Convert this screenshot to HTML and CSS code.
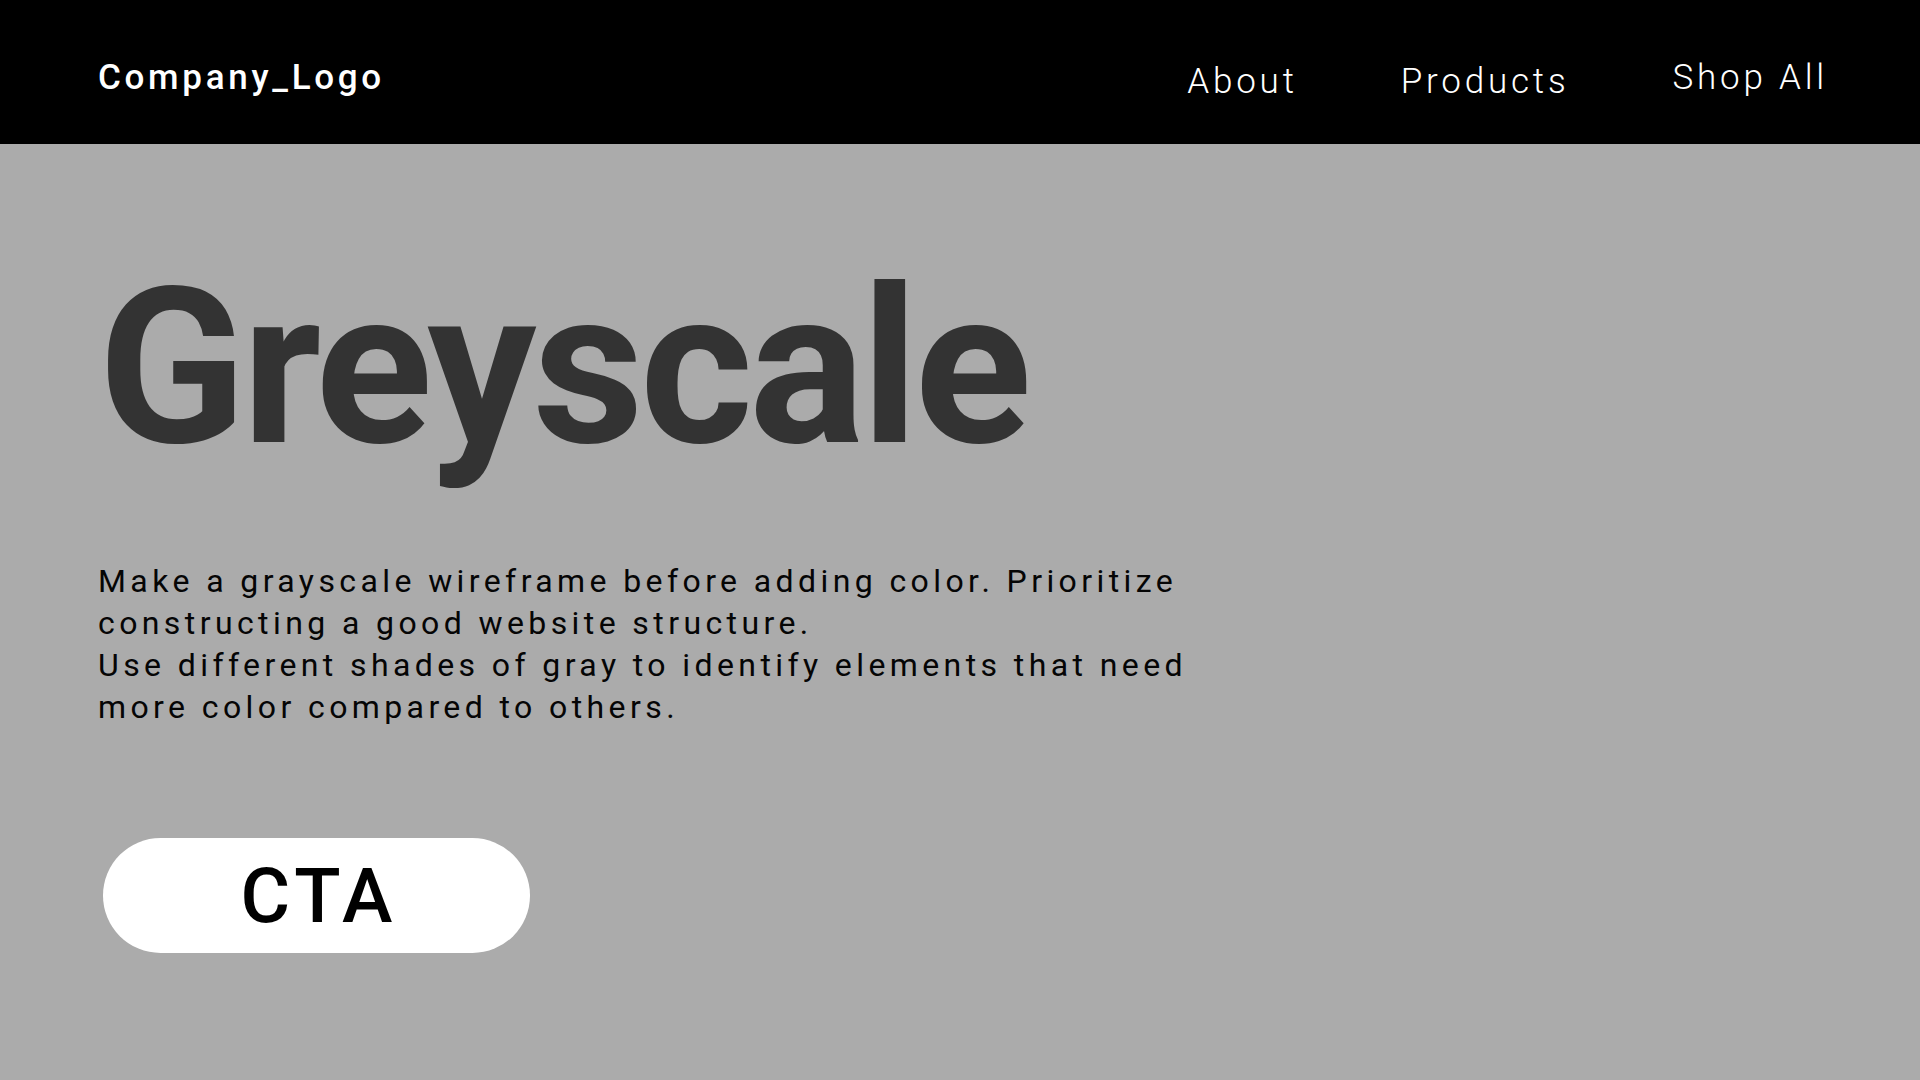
FILE: index.html
```html
<!DOCTYPE html>
<html lang="en">
<head>
<meta charset="utf-8">
<title>Greyscale</title>
<link rel="stylesheet" href="styles.css">
</head>
<body>
<header class="topbar">
  <div class="logo">Company_Logo</div>
  <nav class="nav">
    <a class="nav-link" href="#">About</a>
    <a class="nav-link" href="#">Products</a>
    <a class="nav-link nav-link--raised" href="#">Shop All</a>
  </nav>
</header>
<main class="hero">
  <h1 class="hero-title">Greyscale</h1>
  <p class="hero-text">Make a grayscale wireframe before adding color. Prioritize<br>constructing a good website structure.<br>Use different shades of gray to identify elements that need<br>more color compared to others.</p>
  <a class="cta" href="#">CTA</a>
</main>
</body>
</html>
```
FILE: styles.css
```css
* { box-sizing: border-box; }
html, body { margin: 0; padding: 0; }
body {
  width: 1920px;
  height: 1080px;
  overflow: hidden;
  background: #ababab;
  font-family: Roboto, "Liberation Sans", sans-serif;
}
.topbar {
  height: 144px;
  background: #000;
  display: flex;
  align-items: flex-start;
  justify-content: space-between;
  padding: 60px 92px 0 98px;
}
.logo {
  color: #fff;
  font-size: 35px;
  font-weight: 500;
  letter-spacing: 3.7px;
  line-height: 35px;
}
.nav {
  display: flex;
  align-items: flex-start;
  gap: 103px;
}
.nav-link {
  color: #fff;
  text-decoration: none;
  font-size: 35px;
  font-weight: 300;
  letter-spacing: 3.8px;
  line-height: 35px;
  margin-top: 4px;
}
.nav-link--raised { margin-top: 0; }
.hero {
  padding: 116px 0 0 98px;
}
.hero-title {
  margin: 0;
  font-size: 217px;
  line-height: 217px;
  font-weight: 700;
  color: #333;
  letter-spacing: -4px;
}
.hero-text {
  margin: 83px 0 0 0;
  font-size: 32px;
  line-height: 42px;
  letter-spacing: 4.4px;
  color: #050505;
  font-weight: 400;
}
.cta {
  margin: 110px 0 0 5px;
  display: flex;
  align-items: center;
  justify-content: center;
  width: 427px;
  height: 115px;
  border-radius: 58px;
  background: #fff;
  color: #000;
  text-decoration: none;
  font-size: 76px;
  font-weight: 500;
  letter-spacing: 5px;
  padding-left: 5px;
}
```
